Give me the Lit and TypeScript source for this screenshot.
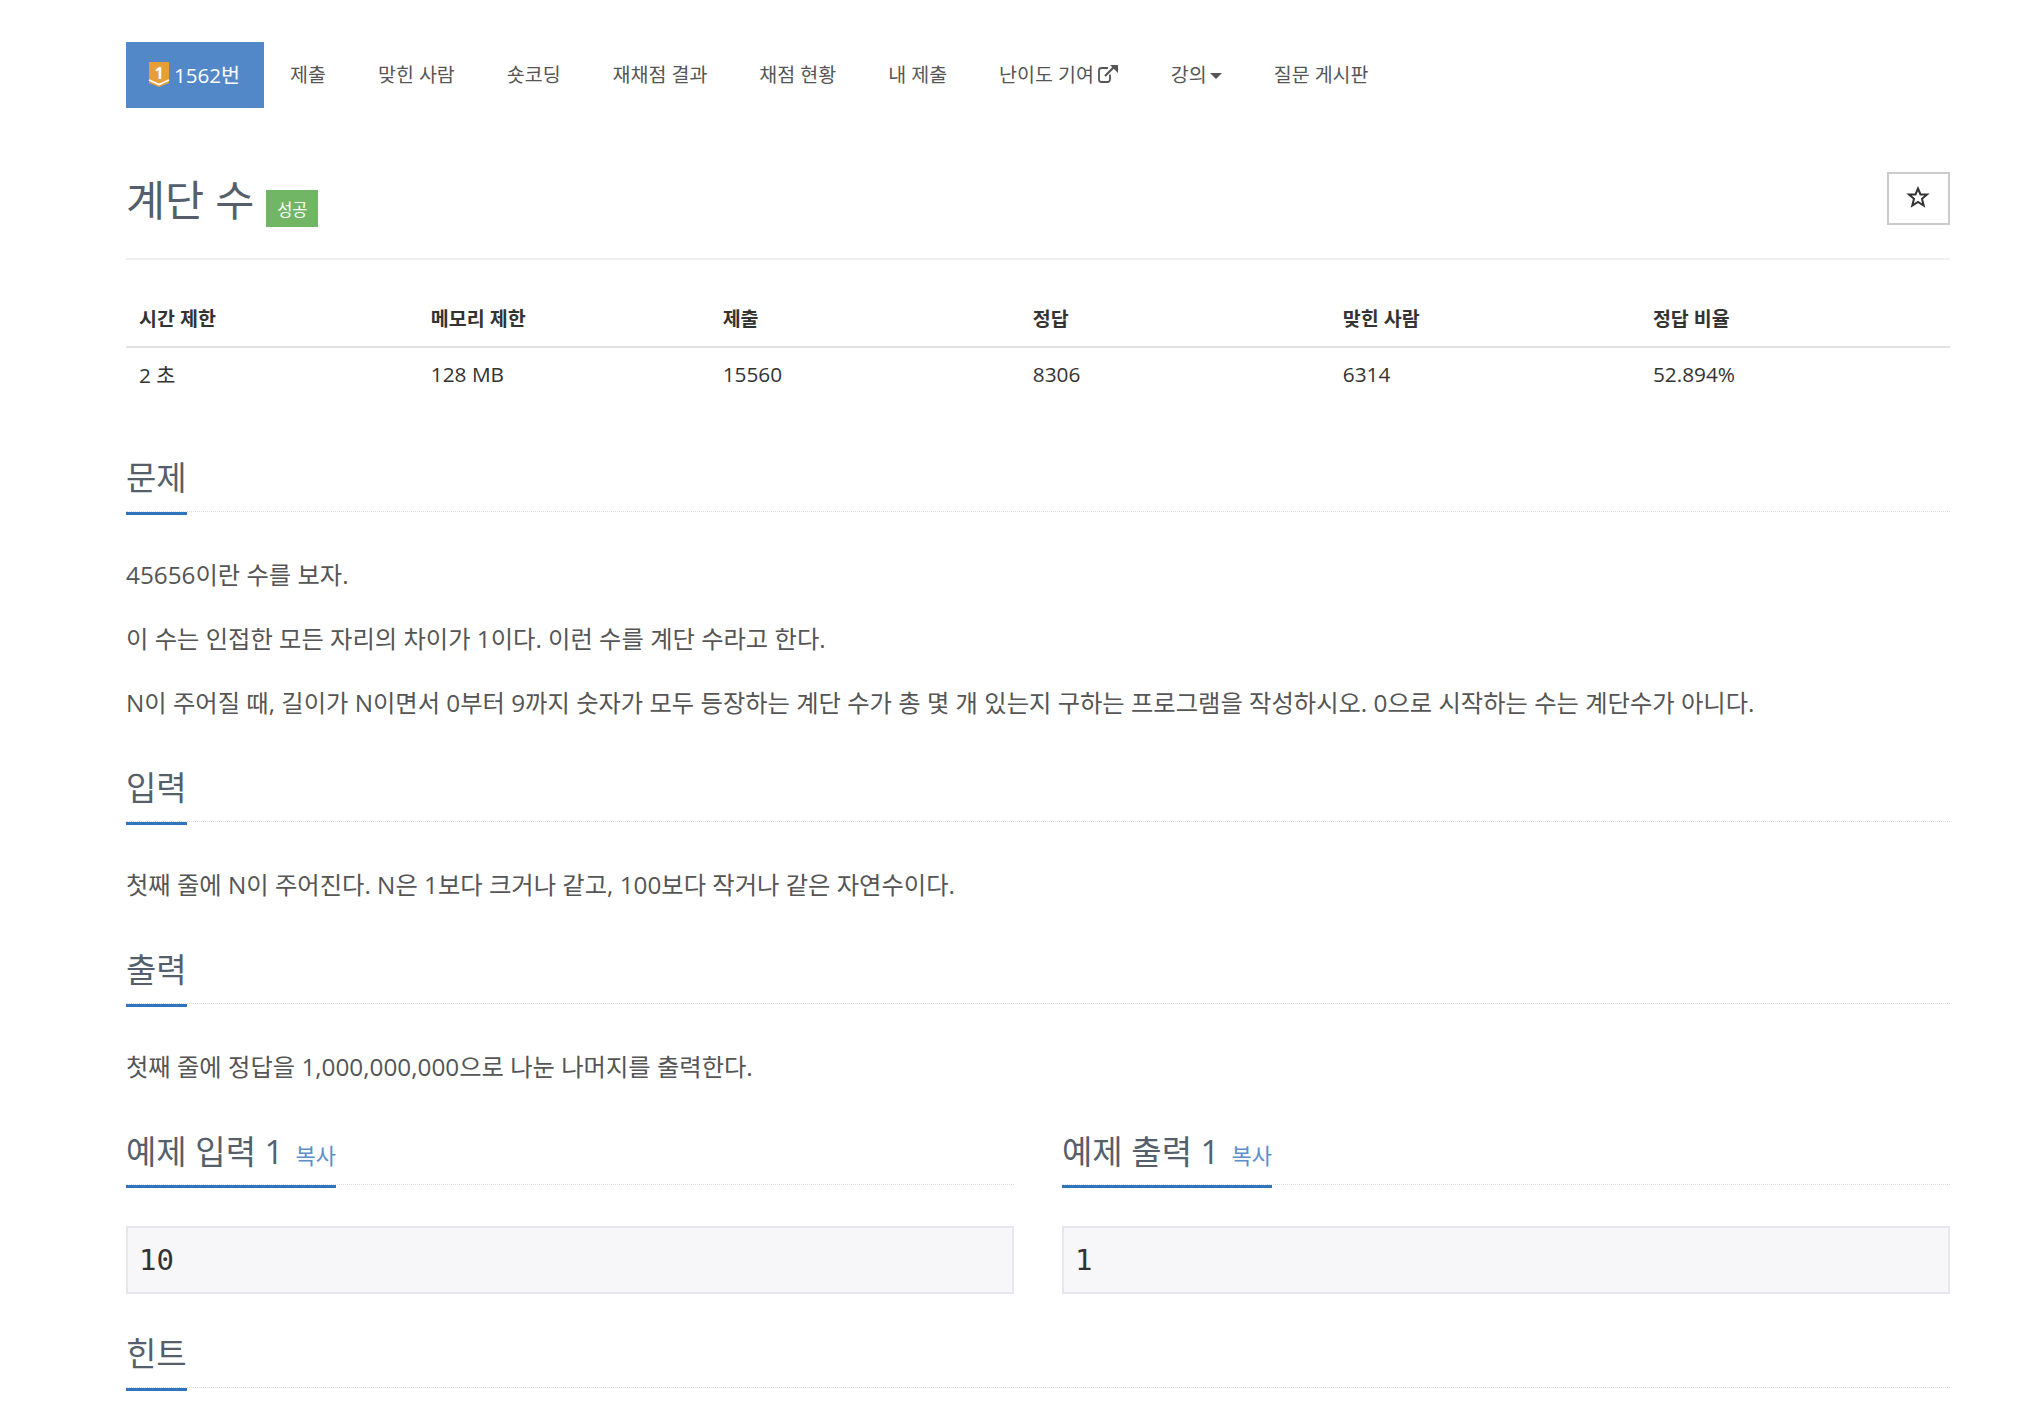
import { LitElement, html, css } from "lit";
import { customElement } from "lit/decorators.js";

@customElement("app-root")
export class AppRoot extends LitElement {
  static styles = css`
    :host { display: block; background: #fff; font-family: "Open Sans", "Noto Sans CJK KR", sans-serif; color: #555; height: 1412px; overflow: hidden; }
    .page { padding: 42px 84px 0 126px; box-sizing: border-box; width: 2034px; }
    .nav { display: flex; height: 66px; align-items: stretch; font-size: 19.5px; color: #555; }
    .nav a { display: flex; align-items: center; padding: 0 26px 3px; white-space: nowrap; }
    .nav a.active { background: #5288c7; color: #fff; padding: 0 24px 3px 22px; gap: 4px; font-size: 20.6px; }
    .nav svg { display: block; }
    .ext { margin-left: 3px; }
    .caret { width: 0; height: 0; border-left: 6px solid transparent; border-right: 6px solid transparent; border-top: 6px solid #555; margin-left: 3px; margin-top: 4px; }
    .title { display: flex; align-items: flex-start; justify-content: space-between; border-bottom: 2px solid #f0f0f0; box-sizing: border-box; height: 152px; }
    .title-left { display: flex; align-items: flex-start; gap: 12px; padding-top: 62px; }
    h1 { margin: 0; font-size: 42.5px; line-height: 60px; font-weight: 400; color: #555f6b; }
    .label { background: #70b665; color: #fff; font-size: 16.5px; width: 52px; height: 37px; display: flex; align-items: center; justify-content: center; margin-top: 20px; }
    .star { width: 63px; height: 53px; box-sizing: border-box; border: 2px solid #ccc; background: #fff; display: flex; align-items: center; justify-content: center; margin-top: 64px; padding: 0 2px 0 0; }
    .star svg { display: block; margin-bottom: 4px; }
    table { width: 100%; border-collapse: collapse; table-layout: fixed; margin-top: 29px; color: #333; font-size: 20.8px; }
    th { text-align: left; font-weight: 700; font-size: 19.5px; padding: 0 13px; height: 58px; border-bottom: 2px solid #e2e2e2; box-sizing: border-box; }
    td { padding: 0 13px; height: 52px; }
    .section-head { display: flex; height: 57px; box-sizing: border-box; border-bottom: 1px dotted #ddd; }
    h2 { margin: 0; height: 60px; box-sizing: border-box; font-size: 33px; line-height: 46px; font-weight: 400; color: #555f6b; border-bottom: 3px solid #2f75bb; display: flex; align-items: baseline; white-space: nowrap; }
    .cols .section-head { height: 58px; }
    .cols h2 { height: 61px; padding-top: 2px; }
    h2 a { color: #5b8fc9; font-size: 22px; margin-left: 12px; }
    .s1 { margin-top: 55px; }
    .s2, .s3 { margin-top: 30px; }
    p { margin: 0; font-size: 24.3px; line-height: 64px; color: #555; }
    .body { padding-top: 31px; }
    .cols { display: grid; grid-template-columns: 1fr 1fr; gap: 48px; margin-top: 28px; }
    pre { margin: 41px 0 0; height: 68px; box-sizing: border-box; background: #f7f7f9; border: 2px solid #e6e6ec; font-family: "DejaVu Sans Mono", monospace; font-size: 29px; color: #333; padding: 0 11px; display: flex; align-items: center; }
    .s4 { margin-top: 37px; }
  `;

  render() {
    const tabs = ["제출", "맞힌 사람", "숏코딩", "재채점 결과", "채점 현황", "내 제출"];
    return html`
      <div class="page">
        <nav class="nav">
          <a class="active">
            <svg width="22" height="26" viewBox="0 0 22 26"><path d="M1 1h20v21l-10 4-10-4z" fill="#e59f36"/><path d="M1 19l10 4.500 10-4.500" fill="none" stroke="#fff" stroke-width="1.800"/><text x="11" y="17.500" text-anchor="middle" font-family="Open Sans" font-weight="700" font-size="16" fill="#fff">1</text></svg>
            <span>1562번</span>
          </a>
          ${tabs.map((t) => html`<a>${t}</a>`)}
          <a>난이도 기여
            <svg class="ext" width="22" height="20" viewBox="0 0 22 20"><path d="M13 10.500V15.500a2.500 2.500 0 0 1-2.500 2.500H4.500A2.500 2.500 0 0 1 2 15.500V6.500A2.500 2.500 0 0 1 4.500 4H11" fill="none" stroke="#555" stroke-width="1.800"/><path d="M8 12L17 3" stroke="#555" stroke-width="2.200"/><path d="M13 1h8v8z" fill="#555"/></svg>
          </a>
          <a>강의<span class="caret"></span></a>
          <a>질문 게시판</a>
        </nav>
        <div class="title">
          <div class="title-left">
            <h1>계단 수</h1>
            <span class="label">성공</span>
          </div>
          <button class="star">
            <svg width="24" height="24" viewBox="0 0 24 24"><path d="M12 3.500l2.500 6h6.500l-5 4.300 1.700 6.700L12 17l-5.700 3.500 1.700-6.700-5-4.300h6.500z" fill="#fff" stroke="#333" stroke-width="2"/></svg>
          </button>
        </div>
        <table>
          <colgroup><col style="width:16%"/><col style="width:16%"/><col style="width:17%"/><col style="width:17%"/><col style="width:17%"/><col style="width:17%"/></colgroup>
          <thead><tr><th>시간 제한</th><th>메모리 제한</th><th>제출</th><th>정답</th><th>맞힌 사람</th><th>정답 비율</th></tr></thead>
          <tbody><tr><td>2 초</td><td>128 MB</td><td>15560</td><td>8306</td><td>6314</td><td>52.894%</td></tr></tbody>
        </table>
        <section class="s1">
          <div class="section-head"><h2>문제</h2></div>
          <div class="body">
            <p>45656이란 수를 보자.</p>
            <p>이 수는 인접한 모든 자리의 차이가 1이다. 이런 수를 계단 수라고 한다.</p>
            <p>N이 주어질 때, 길이가 N이면서 0부터 9까지 숫자가 모두 등장하는 계단 수가 총 몇 개 있는지 구하는 프로그램을 작성하시오. 0으로 시작하는 수는 계단수가 아니다.</p>
          </div>
        </section>
        <section class="s2">
          <div class="section-head"><h2>입력</h2></div>
          <div class="body"><p>첫째 줄에 N이 주어진다. N은 1보다 크거나 같고, 100보다 작거나 같은 자연수이다.</p></div>
        </section>
        <section class="s3">
          <div class="section-head"><h2>출력</h2></div>
          <div class="body"><p>첫째 줄에 정답을 1,000,000,000으로 나눈 나머지를 출력한다.</p></div>
        </section>
        <div class="cols">
          <div>
            <div class="section-head"><h2>예제 입력 1 <a>복사</a></h2></div>
            <pre>10</pre>
          </div>
          <div>
            <div class="section-head"><h2>예제 출력 1 <a>복사</a></h2></div>
            <pre>1</pre>
          </div>
        </div>
        <section class="s4">
          <div class="section-head"><h2>힌트</h2></div>
        </section>
      </div>
    `;
  }
}
